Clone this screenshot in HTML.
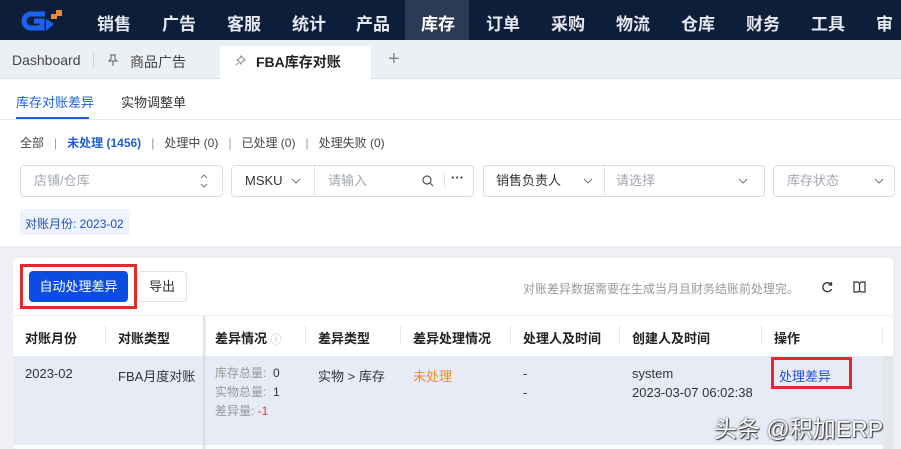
<!DOCTYPE html>
<html><head><meta charset="utf-8"><style>
*{box-sizing:border-box;margin:0;padding:0}
body{width:901px;height:449px;overflow:hidden;font-family:"Liberation Sans","Noto Sans CJK SC",sans-serif;font-size:13px;color:#333;background:#fff;position:relative}
.a{position:absolute;white-space:nowrap}
.nav{position:absolute;left:0;top:0;width:901px;height:40px;background:#0d1e3b}
.nav span{position:absolute;top:10px;color:#e6e9ef;font-size:17px;font-weight:bold}
.tabs{position:absolute;left:0;top:40px;width:901px;height:39px;background:#eceff3;border-bottom:1px solid #dde1e6}
.box{position:absolute;border:1px solid #d9dce1;border-radius:4px;background:#fff;height:32px;top:165px}
.box span{line-height:16px}
.ph{color:#a3a8b0}
.chev{position:absolute;top:12px}
.th{position:absolute;top:328px;font-weight:bold;color:#222;font-size:13px}
.sep{position:absolute;top:326px;width:1px;height:18px;background:#e5e7eb}
</style></head><body>
<div class="nav">
<svg class="a" style="left:18px;top:8px" width="46" height="26" viewBox="0 0 46 26"><path d="M27 6 H13 a7 7 0 0 0 0 14 H24 V13 H16" fill="none" stroke="#1b62f0" stroke-width="5"/><path d="M28 11 V23 L36 16Z" fill="#1b62f0"/><rect x="38" y="2" width="6" height="6" fill="#f08a3a"/><rect x="33" y="6" width="6" height="5" fill="#f08a3a"/></svg>
<div class="a" style="left:405px;top:0;width:64px;height:40px;background:#2b3a55"></div>
<span style="left:97px">销售</span><span style="left:162px">广告</span><span style="left:227px">客服</span><span style="left:292px">统计</span><span style="left:356px">产品</span><span style="left:421px;color:#fff">库存</span><span style="left:486px">订单</span><span style="left:551px">采购</span><span style="left:616px">物流</span><span style="left:681px">仓库</span><span style="left:746px">财务</span><span style="left:811px">工具</span><span style="left:876px">审批</span>
</div>
<div class="tabs">
<div class="a" style="left:12px;top:12px;font-size:14px;color:#444">Dashboard</div>
<div class="a" style="left:93px;top:13px;width:1px;height:14px;background:#ccc"></div>
<svg class="a" style="left:108px;top:14px" width="10" height="12" viewBox="0 0 10 12"><path d="M2 1h6M3 1v4l-2 2h8l-2-2V1M5 7v5" fill="none" stroke="#777" stroke-width="1.2"/></svg>
<div class="a" style="left:130px;top:12px;font-size:14px;color:#444">商品广告</div>
<div class="a" style="left:220px;top:6px;width:151px;height:34px;background:#fff;border-radius:4px 4px 0 0"></div>
<svg class="a" style="left:235px;top:15px" width="11" height="11" viewBox="0 0 11 11"><path d="M6 1l4 4-2 1-2 2 0 1-4-4 1 0 2-2zM3 8l-2 2" fill="none" stroke="#888" stroke-width="1"/></svg>
<div class="a" style="left:256px;top:12px;font-size:14px;font-weight:bold;color:#222">FBA库存对账</div>
<div class="a" style="left:388px;top:8px;font-size:20px;color:#888">+</div>
</div>
<div class="a" style="left:16px;top:92px;color:#1e5fd8">库存对账差异</div>
<div class="a" style="left:121px;top:92px;color:#333">实物调整单</div>
<div class="a" style="left:16px;top:117px;width:73px;height:2px;background:#1e5fd8"></div>
<div class="a" style="left:0;top:119px;width:901px;height:1px;background:#e6e8eb"></div>
<div class="a" style="left:20px;top:134px;font-size:12px;color:#444">全部 &nbsp;&nbsp;<span style="color:#999">|</span>&nbsp;&nbsp; <b style="color:#1e5fd8">未处理 (1456)</b> &nbsp;&nbsp;<span style="color:#999">|</span>&nbsp;&nbsp; 处理中 (0) &nbsp;&nbsp;<span style="color:#999">|</span>&nbsp;&nbsp; 已处理 (0) &nbsp;&nbsp;<span style="color:#999">|</span>&nbsp;&nbsp; 处理失败 (0)</div>
<div class="box" style="left:20px;width:203px"><span class="a ph" style="left:13px;top:7px">店铺/仓库</span><svg class="a" style="left:179px;top:8px" width="8" height="14" viewBox="0 0 8 14"><path d="M1 4l3-3 3 3M1 10l3 3 3-3" fill="none" stroke="#777" stroke-width="1"/></svg></div>
<div class="box" style="left:231px;width:243px"><span class="a" style="left:13px;top:7px">MSKU</span><svg class="chev" style="left:59px" width="10" height="6" viewBox="0 0 10 6"><path d="M1 1l4 4 4-4" fill="none" stroke="#777" stroke-width="1.1"/></svg><div class="a" style="left:82px;top:0;width:1px;height:30px;background:#e0e2e6"></div><span class="a ph" style="left:96px;top:7px">请输入</span><svg class="a" style="left:190px;top:9px" width="12" height="12" viewBox="0 0 12 12"><circle cx="5" cy="5" r="4" fill="none" stroke="#555" stroke-width="1.2"/><path d="M8 8l3 3" stroke="#555" stroke-width="1.2"/></svg><div class="a" style="left:212px;top:8px;width:1px;height:14px;background:#e0e2e6"></div><span class="a" style="left:219px;top:4px;color:#333;font-weight:bold">···</span></div>
<div class="box" style="left:483px;width:282px"><span class="a" style="left:12px;top:7px">销售负责人</span><svg class="chev" style="left:99px" width="10" height="6" viewBox="0 0 10 6"><path d="M1 1l4 4 4-4" fill="none" stroke="#777" stroke-width="1.1"/></svg><div class="a" style="left:120px;top:0;width:1px;height:30px;background:#e0e2e6"></div><span class="a ph" style="left:132px;top:7px">请选择</span><svg class="chev" style="left:254px" width="10" height="6" viewBox="0 0 10 6"><path d="M1 1l4 4 4-4" fill="none" stroke="#777" stroke-width="1.1"/></svg></div>
<div class="box" style="left:773px;width:122px"><span class="a ph" style="left:13px;top:7px">库存状态</span><svg class="chev" style="left:100px" width="10" height="6" viewBox="0 0 10 6"><path d="M1 1l4 4 4-4" fill="none" stroke="#777" stroke-width="1.1"/></svg></div>
<div class="a" style="left:20px;top:209px;width:110px;height:26px;background:#eef3fd;border-radius:3px;color:#1e4fc0;font-size:12px;padding:6px 5px">对账月份: 2023-02</div>
<div class="a" style="left:0;top:246px;width:901px;height:203px;background:#eef0f4"></div>
<div class="a" style="left:13px;top:258px;width:880px;height:191px;background:#fff;border-radius:4px"></div>
<div class="a" style="left:20px;top:264px;width:117px;height:45px;border:3px solid #e02b2b"></div>
<div class="a" style="left:29px;top:271px;width:99px;height:31px;background:#0c4de0;border-radius:4px;color:#fff;font-size:13px;text-align:center;line-height:31px">自动处理差异</div>
<div class="a" style="left:137px;top:271px;width:50px;height:31px;border:1px solid #dcdfe4;border-radius:4px;text-align:center;line-height:29px">导出</div>
<div class="a" style="left:523px;top:280px;font-size:12px;color:#999">对账差异数据需要在生成当月且财务结账前处理完。</div>
<svg class="a" style="left:821px;top:281px" width="12" height="12" viewBox="0 0 12 12"><path d="M10 3.5A4.5 4.5 0 1 0 10.5 8" fill="none" stroke="#333" stroke-width="1.3"/><path d="M10.5 1v3h-3" fill="none" stroke="#333" stroke-width="1.3"/></svg>
<svg class="a" style="left:853px;top:281px" width="13" height="12" viewBox="0 0 13 12"><path d="M1 1h4l1.5 1.5L8 1h4v10H8l-1.5-1L5 11H1zM6.5 2.5v8" fill="none" stroke="#333" stroke-width="1.2"/></svg>
<div class="a" style="left:13px;top:315px;width:880px;height:1px;background:#eceef1"></div>
<div class="th" style="left:25px">对账月份</div><div class="sep" style="left:105px"></div>
<div class="th" style="left:118px">对账类型</div>
<div class="th" style="left:215px">差异情况 <span style="color:#bbb;font-weight:normal;font-size:11px">ⓘ</span></div><div class="sep" style="left:305px"></div>
<div class="th" style="left:318px">差异类型</div><div class="sep" style="left:400px"></div>
<div class="th" style="left:413px">差异处理情况</div><div class="sep" style="left:510px"></div>
<div class="th" style="left:523px">处理人及时间</div><div class="sep" style="left:619px"></div>
<div class="th" style="left:632px">创建人及时间</div><div class="sep" style="left:761px"></div>
<div class="th" style="left:774px">操作</div><div class="sep" style="left:882px"></div>
<div class="a" style="left:13px;top:356px;width:870px;height:89px;background:#e6ebf6"></div>
<div class="a" style="left:883px;top:356px;width:10px;height:93px;background:#e4e6ea"></div>
<div class="a" style="left:203px;top:316px;width:4px;height:133px;background:linear-gradient(90deg,#d5d9e0,transparent)"></div>
<div class="a" style="left:25px;top:366px">2023-02</div>
<div class="a" style="left:118px;top:366px">FBA月度对账</div>
<div class="a" style="left:215px;top:364px;font-size:12px;color:#999;line-height:19px">库存总量: &nbsp;<span style="color:#333">0</span><br>实物总量: &nbsp;<span style="color:#333">1</span><br>差异量: <span style="color:#e04040">-1</span></div>
<div class="a" style="left:318px;top:366px">实物 &gt; 库存</div>
<div class="a" style="left:413px;top:366px;color:#f08a24">未处理</div>
<div class="a" style="left:523px;top:364px;line-height:19px">-<br>-</div>
<div class="a" style="left:632px;top:364px;line-height:19px">system<br>2023-03-07 06:02:38</div>
<div class="a" style="left:771px;top:357px;width:81px;height:32px;border:3px solid #e02b2b"></div>
<div class="a" style="left:779px;top:366px;color:#1e4fd8">处理差异</div>
<div class="a" style="left:714px;top:410px;font-size:23px;color:#fff;text-shadow:0 0 2px #333,1px 1px 1px #333">头条 @积加ERP</div>
</body></html>
